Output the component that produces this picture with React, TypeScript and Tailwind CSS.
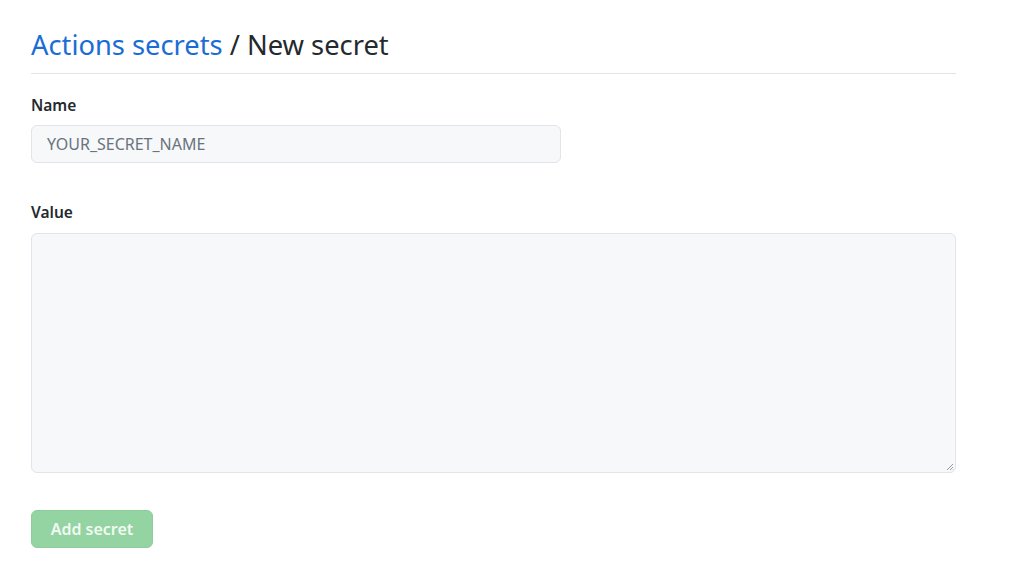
export default function App() {
  return (
    <div className="w-[1024px] h-[588px] bg-white overflow-hidden" style={{ fontFamily: '"Noto Sans", "Open Sans", sans-serif' }}>
      <div className="pl-[31px] pt-[27px] w-[956px]">
        <div className="border-b border-[#e1e4e8] pb-[10px]">
          <h1 className="text-[27.3px] leading-[36px] font-normal text-[#24292e]">
            <span className="text-[#1a6dd4]">Actions secrets</span> / New secret
          </h1>
        </div>
        <div className="mt-[21px] text-[15.5px] leading-[20px] font-semibold text-[#24292e]">Name</div>
        <div className="mt-[10px] w-[530px] h-[38px] rounded-[6px] border border-[#e1e4e8] bg-[#f6f8fa] flex items-center px-[15px] text-[16px] text-[#6a737d]">
          YOUR_SECRET_NAME
        </div>
        <div className="mt-[39px] text-[15.5px] leading-[20px] font-semibold text-[#24292e]">Value</div>
        <div className="mt-[11px] relative w-[925px] h-[240px] rounded-[6px] border border-[#e1e4e8] bg-[#f6f8fa]">
          <svg className="absolute right-[1px] bottom-[1px]" width="8" height="8" viewBox="0 0 8 8">
            <path d="M7 1 L1 7 M7 4 L4 7 M7 6.5 L6.5 7" stroke="#9a9a9a" strokeWidth="1" />
          </svg>
        </div>
        <button className="mt-[37px] w-[122px] h-[38px] rounded-[6px] bg-[#94d3a2] border border-[#8dcf9c] text-[16px] font-semibold text-[#f0faf2]">
          Add secret
        </button>
      </div>
    </div>
  );
}
